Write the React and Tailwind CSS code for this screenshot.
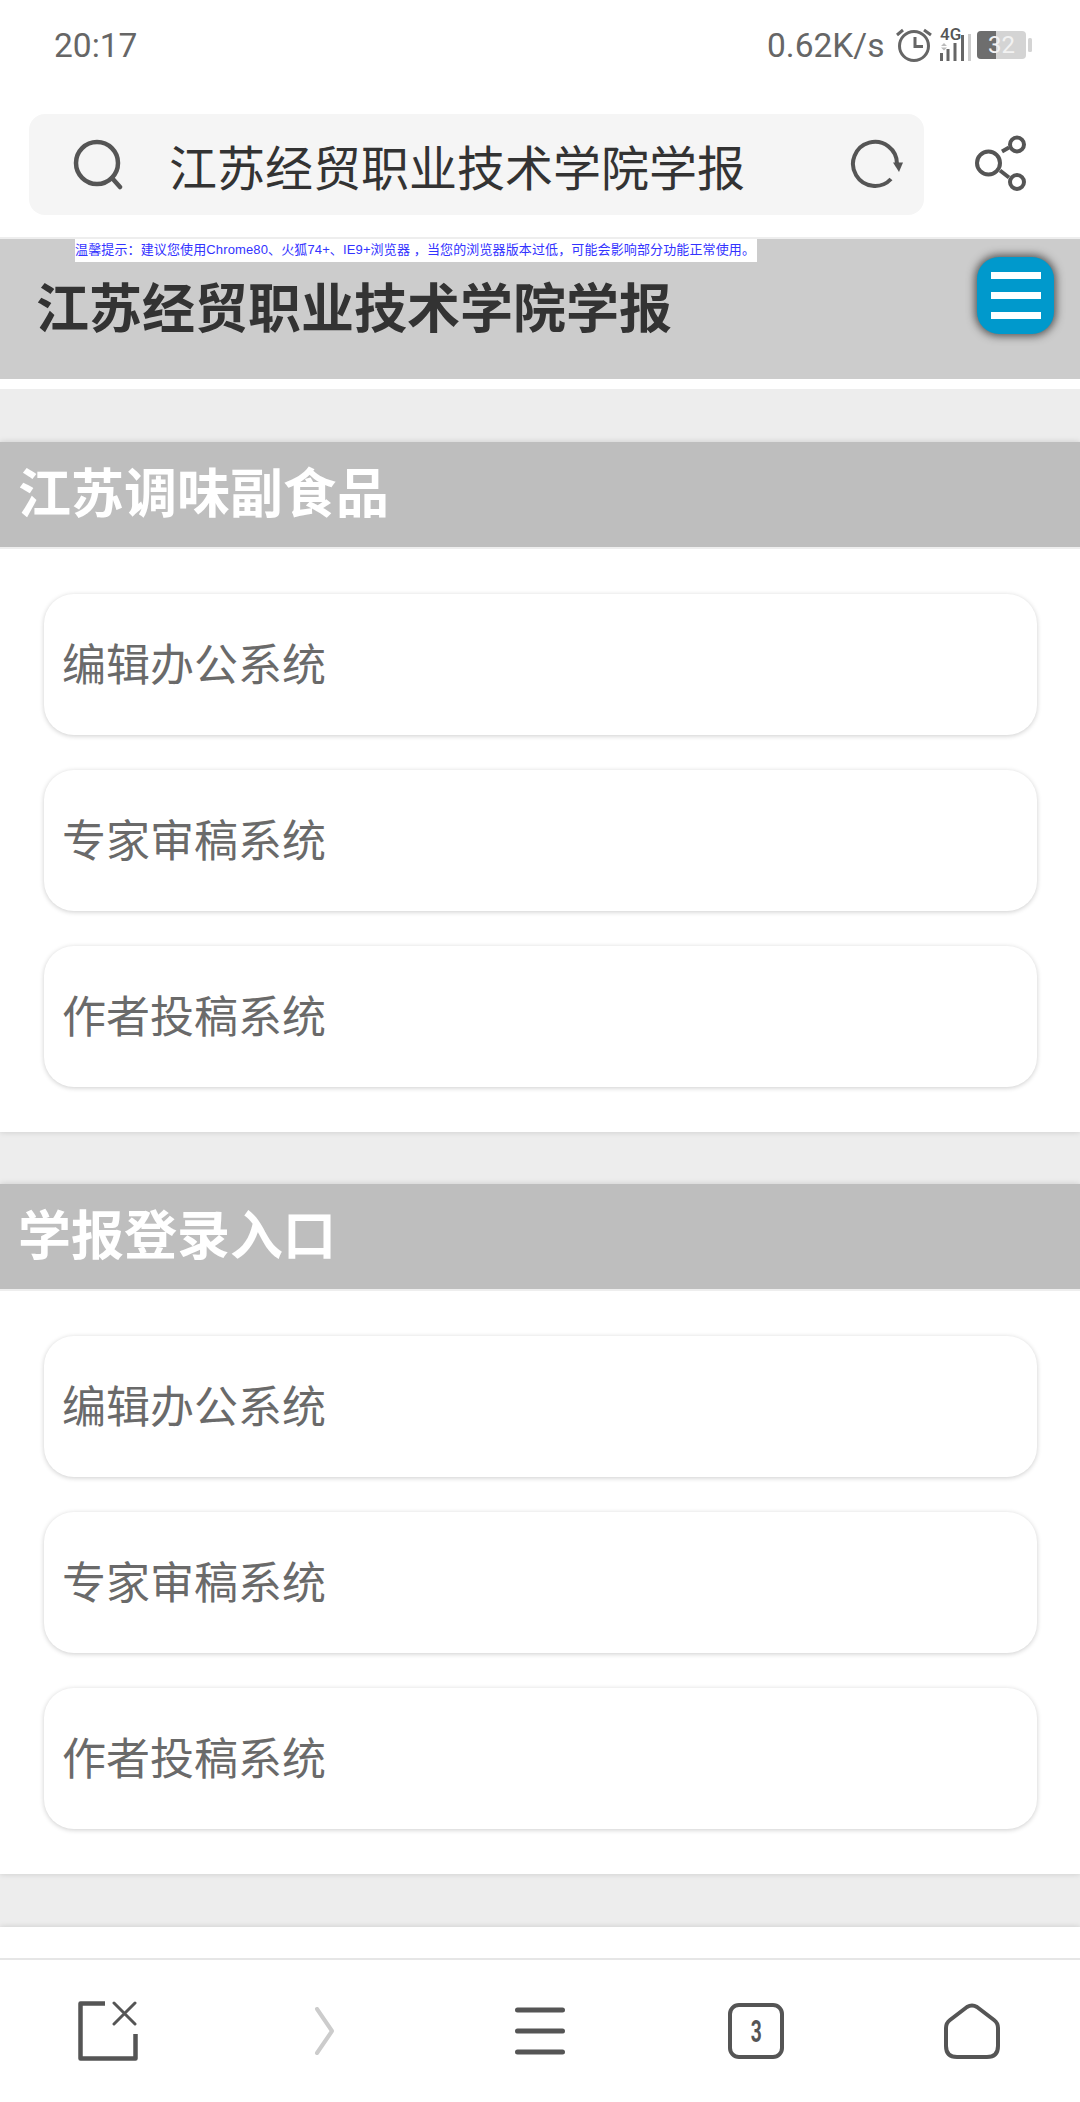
import React from "react";

const cjk = "font-['Noto_Sans_CJK_SC','Noto_Sans',sans-serif]";

function StatusBar() {
  return (
    <div className="relative h-[114px] font-['Roboto',sans-serif] text-[#666666]">
      <span className="absolute left-[54px] top-[24px] text-[33.5px] leading-[44px]">20:17</span>
      <span className="absolute left-[767px] top-[24px] text-[33.5px] leading-[44px]">0.62K/s</span>
      <svg className="absolute left-[890px] top-[24px]" width="150" height="40" viewBox="890 24 150 40" fill="none">
        {/* alarm */}
        <circle cx="914" cy="46" r="14.5" stroke="#666" strokeWidth="3" />
        <path d="M915 37v9.5h8" stroke="#666" strokeWidth="3" />
        <path d="M897 35l6-5M931 35l-7-5" stroke="#666" strokeWidth="3" />
        {/* signal */}
        <path d="M941.5 53v8M948 49v12M955 43v18M962.5 35v26" stroke="#666" strokeWidth="3" />
        <path d="M969.5 34v27" stroke="#cccccc" strokeWidth="3" />
        <path d="M941 46l3-3 3 3zM941 47.5l3 3 3-3z" fill="#bbbbbb" />
        {/* battery nub */}
        <rect x="1028" y="38" width="4" height="14" rx="1.5" fill="#d4d4d4" />
      </svg>
      <span className="absolute left-[940px] top-[25px] text-[17px] leading-[18px] font-medium text-[#555555]">4G</span>
      <div className="absolute left-[977px] top-[31px] flex h-[28px] w-[49px] overflow-hidden rounded-[4px] bg-[#d4d4d4]">
        <div className="h-full w-[19px] bg-[#6e6e6e]" />
        <span className="absolute inset-0 text-center text-[24px] leading-[28px] text-[#f2f2f2]">32</span>
      </div>
    </div>
  );
}

function SearchRow() {
  return (
    <div className="flex h-[101px] items-center pl-[29px]">
      <div className="flex h-[101px] w-[895px] items-center rounded-[16px] bg-[#f5f5f5]">
        <svg className="ml-[44px] shrink-0" width="50" height="52" viewBox="0 0 50 52" fill="none">
          <circle cx="24" cy="24" r="21" stroke="#555" strokeWidth="4.5" />
          <path d="M39 39l8 9" stroke="#555" strokeWidth="4.5" strokeLinecap="round" />
        </svg>
        <span className={`${cjk} ml-[46px] flex-1 text-[48px] leading-[60px] text-[#333333]`}>江苏经贸职业技术学院学报</span>
        <svg className="mr-[20px] shrink-0" width="54" height="52" viewBox="0 0 54 52" fill="none">
          <path d="M47 25A22 22 0 1 0 41 40" stroke="#555" strokeWidth="4" />
          <path d="M43 23.5h10l-4 9.5z" fill="#555" />
        </svg>
      </div>
      <svg className="ml-[49px] shrink-0" width="56" height="62" viewBox="0 0 56 62" fill="none">
        <circle cx="15.5" cy="29" r="11.5" stroke="#555" strokeWidth="4" />
        <circle cx="44" cy="10.5" r="7" stroke="#555" strokeWidth="4" />
        <circle cx="44" cy="48" r="7" stroke="#555" strokeWidth="4" />
        <path d="M29 17.5l7-4M27 36.5l9 7" stroke="#555" strokeWidth="4" />
      </svg>
    </div>
  );
}

function SiteHeader() {
  return (
    <div className="relative h-[140px] bg-[#cccccc]">
      <div className="ml-[75px] h-[23px] w-[682px] overflow-hidden whitespace-nowrap bg-white font-['Liberation_Sans','Noto_Sans_CJK_SC',sans-serif] text-[13px] leading-[21px] tracking-[0.13px] text-[#3333ff]">
        温馨提示：建议您使用Chrome80、火狐74+、IE9+浏览器 ，当您的浏览器版本过低，可能会影响部分功能正常使用。
      </div>
      <h1 className={`${cjk} ml-[36px] mt-[8px] text-[53px] font-bold leading-[70px] text-[#333333]`}>江苏经贸职业技术学院学报</h1>
      <div className="absolute left-[977px] top-[18px] flex h-[77px] w-[77px] flex-col items-center justify-center gap-[13px] rounded-[22px] bg-[#0099cc] shadow-[0_0_8px_2px_rgba(40,40,40,0.75)]">
        <div className="h-[7px] w-[50px] bg-white" />
        <div className="h-[7px] w-[50px] bg-white" />
        <div className="h-[7px] w-[50px] bg-white" />
      </div>
    </div>
  );
}

function Section({ title, className }) {
  const items = ["编辑办公系统", "专家审稿系统", "作者投稿系统"];
  return (
    <section className={`${className} shadow-[0_0_6px_rgba(0,0,0,0.15)]`}>
      <div className="flex h-[107px] items-center border-b-2 border-[#eeeeee] bg-[#bebebe] pb-[10px] pl-[18px]">
        <h2 className={`${cjk} text-[53px] font-bold leading-[70px] text-white`}>{title}</h2>
      </div>
      <div className="flex flex-col gap-[35px] bg-white pb-[45px] pl-[44px] pr-[43px] pt-[45px]">
        {items.map((item) => (
          <div
            key={item}
            className={`${cjk} flex h-[141px] items-center rounded-[30px] bg-white pb-[5px] pl-[18px] text-[44px] text-[#6a6a6a] shadow-[0_1px_5px_rgba(0,0,0,0.2)]`}
          >
            {item}
          </div>
        ))}
      </div>
    </section>
  );
}

function BottomBar() {
  return (
    <div className="grid h-[144px] shrink-0 grid-cols-5 border-t-2 border-[#e6e6e6] bg-white">
      <div className="flex items-center justify-center">
        <svg width="60" height="60" viewBox="0 0 60 60" fill="none">
          <path d="M27 2.5H2.5V57.5H57.5V33" stroke="#555" strokeWidth="4.5" strokeLinejoin="round" />
          <path d="M36 2l21 21M57 2L36 23" stroke="#555" strokeWidth="3" strokeLinecap="round" />
        </svg>
      </div>
      <div className="flex items-center justify-center">
        <svg width="20" height="48" viewBox="0 0 20 48" fill="none">
          <path d="M3 2l15 22L3 46" stroke="#cccccc" strokeWidth="4" strokeLinecap="round" strokeLinejoin="round" />
        </svg>
      </div>
      <div className="flex items-center justify-center">
        <svg width="50" height="48" viewBox="0 0 50 48" fill="none">
          <path d="M2.5 3h45M2.5 24h45M2.5 45h45" stroke="#555" strokeWidth="5" strokeLinecap="round" />
        </svg>
      </div>
      <div className="flex items-center justify-center">
        <div className="flex h-[56px] w-[56px] items-center justify-center rounded-[11px] border-[4.5px] border-[#555555] font-['Roboto',sans-serif] text-[32px] font-bold leading-none text-[#555555]">
          <span className="scale-x-[0.6]">3</span>
        </div>
      </div>
      <div className="flex items-center justify-center">
        <svg width="56" height="58" viewBox="0 0 56 58" fill="none">
          <path d="M6 18L23 5q5-3 10 0L50 18q4 3 4 8V44q0 11-11 11H13Q2 55 2 44V26q0-5 4-8z" stroke="#555" strokeWidth="4" strokeLinejoin="round" />
        </svg>
      </div>
    </div>
  );
}

export default function App() {
  return (
    <div className="flex h-[2102px] w-[1080px] flex-col overflow-hidden bg-white">
      <StatusBar />
      <SearchRow />
      <div className="h-[24px] border-b-2 border-[#eeeeee]" />
      <SiteHeader />
      <div className="h-[10px] bg-white" />
      <main className="flex-1 overflow-hidden bg-[#ededed]">
        <Section title="江苏调味副食品" className="mt-[53px]" />
        <Section title="学报登录入口" className="mt-[52px]" />
        <div className="mt-[53px] h-[40px] bg-white shadow-[0_0_6px_rgba(0,0,0,0.15)]" />
      </main>
      <BottomBar />
    </div>
  );
}
